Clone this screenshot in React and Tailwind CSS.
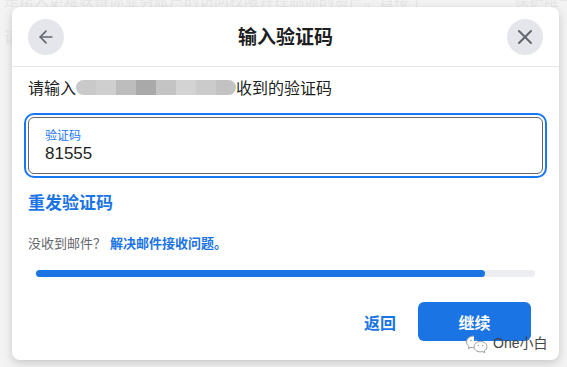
import { X, ArrowLeft } from "lucide-react";

const blur = ["#c9c9c9", "#cfcfcf", "#bdbdbd", "#a9a9a9", "#c4c4c4", "#d3d3d3", "#cbcbcb", "#c2c2c2"];

const WeChatMark = () => (
  <svg width="24" height="20" viewBox="0 0 24 20" fill="none" stroke="#9a9a9a" strokeWidth="1">
    <path d="M9 2C4.6 2 1.5 4.8 1.5 8c0 1.9 1 3.4 2.6 4.5l-.7 2.2 2.6-1.4c1 .3 2 .4 3 .4" fill="#fff" />
    <path d="M15.5 7.5c-3.6 0-6.4 2.3-6.4 5.2s2.8 5.2 6.4 5.2c.8 0 1.5-.1 2.2-.3l2.1 1.1-.5-1.8c1.6-1 2.6-2.5 2.6-4.2 0-2.9-2.8-5.2-6.4-5.2z" fill="#fff" />
    <circle cx="6" cy="6.5" r="0.8" fill="#9a9a9a" stroke="none" />
    <circle cx="11" cy="6" r="0.8" fill="#9a9a9a" stroke="none" />
    <circle cx="13.2" cy="11.5" r="0.7" fill="#9a9a9a" stroke="none" />
    <circle cx="17.8" cy="11.5" r="0.7" fill="#9a9a9a" stroke="none" />
  </svg>
);

export default function App() {
  return (
    <div
      className="relative h-[367px] w-[567px] overflow-hidden bg-[#f3f3f3] text-[#1c1e21]"
      style={{ fontFamily: '"Noto Sans CJK SC", "Noto Sans", sans-serif' }}
    >
      <div className="flex flex-col gap-[22px] px-[4px] text-[15px] leading-none text-[#e6e6e6]">
        <p className="-mt-[8px] whitespace-nowrap">是帮人更难获得你业务账户的访问权限并控制你的资产。直接个　　　　　　保护唯一的业务资产</p>
        <p className="whitespace-nowrap">请</p>
      </div>

      <div className="absolute left-[12px] top-[7px] flex h-[353px] w-[547px] flex-col rounded-lg bg-white shadow-[0_3px_10px_rgba(0,0,0,0.18)]">
        <div className="flex h-[60px] items-center justify-between border-b border-[#e4e6eb] px-[16px]">
          <button className="flex h-[36px] w-[36px] items-center justify-center rounded-full bg-[#e4e6eb] text-[#606770]">
            <ArrowLeft size={20} strokeWidth={2} />
          </button>
          <h1 className="text-[19px] font-bold">输入验证码</h1>
          <button className="flex h-[36px] w-[36px] items-center justify-center rounded-full bg-[#e4e6eb] text-[#606770]">
            <X size={24} strokeWidth={2} />
          </button>
        </div>

        <div className="flex flex-col px-[16px] pt-[8px]">
          <div className="flex h-[24px] items-center text-[16px]">
            <span>请输入</span>
            <span className="flex h-[15px] items-center">
              {blur.map((c, i) => (
                <span
                  key={i}
                  className={`h-[15px] w-[20px] ${i === 0 ? "rounded-l-full" : ""} ${i === blur.length - 1 ? "rounded-r-full" : ""}`}
                  style={{ backgroundColor: c }}
                />
              ))}
            </span>
            <span>收到的验证码</span>
          </div>

          <div className="mt-[18px] flex h-[57px] flex-col justify-center rounded-md border border-[#65676b] px-[16px] outline-2 outline-offset-2 outline-[#1877f2]">
            <span className="text-[12px] leading-[16px] text-[#1877f2]">验证码</span>
            <span className="text-[17px] leading-[22px] text-[#1c1e21]" style={{ fontFamily: '"Liberation Sans", "Noto Sans CJK SC", sans-serif' }}>
              81555
            </span>
          </div>

          <div className="mt-[16px] text-[17px] font-bold leading-[24px] text-[#1b74e4]">重发验证码</div>

          <div className="mt-[20px] flex items-center gap-[4px] text-[13px] leading-[18px]">
            <span className="text-[#65676b]">没收到邮件？</span>
            <span className="font-bold text-[#1b74e4]">解决邮件接收问题。</span>
          </div>

          <div className="mx-[8px] mt-[18px] h-[7px] rounded-full bg-[#ebedf0]">
            <div className="h-full rounded-full bg-[#1b74e4]" style={{ width: "90%" }} />
          </div>

          <div className="mt-[25px] flex items-center justify-end gap-[20px] pr-[12px]">
            <button className="px-[2px] text-[16px] font-bold text-[#1b74e4]">返回</button>
            <button className="flex h-[39px] w-[113px] items-center justify-center rounded-md bg-[#1b74e4] text-[16px] font-bold text-white">
              继续
            </button>
          </div>
        </div>
      </div>

      <div className="absolute left-[465px] top-[333px] flex items-center gap-[4px]">
        <WeChatMark />
        <span className="text-[14px] text-[#444]" style={{ fontFamily: '"Liberation Sans", "Noto Sans CJK SC", sans-serif' }}>
          One小白
        </span>
      </div>
    </div>
  );
}
